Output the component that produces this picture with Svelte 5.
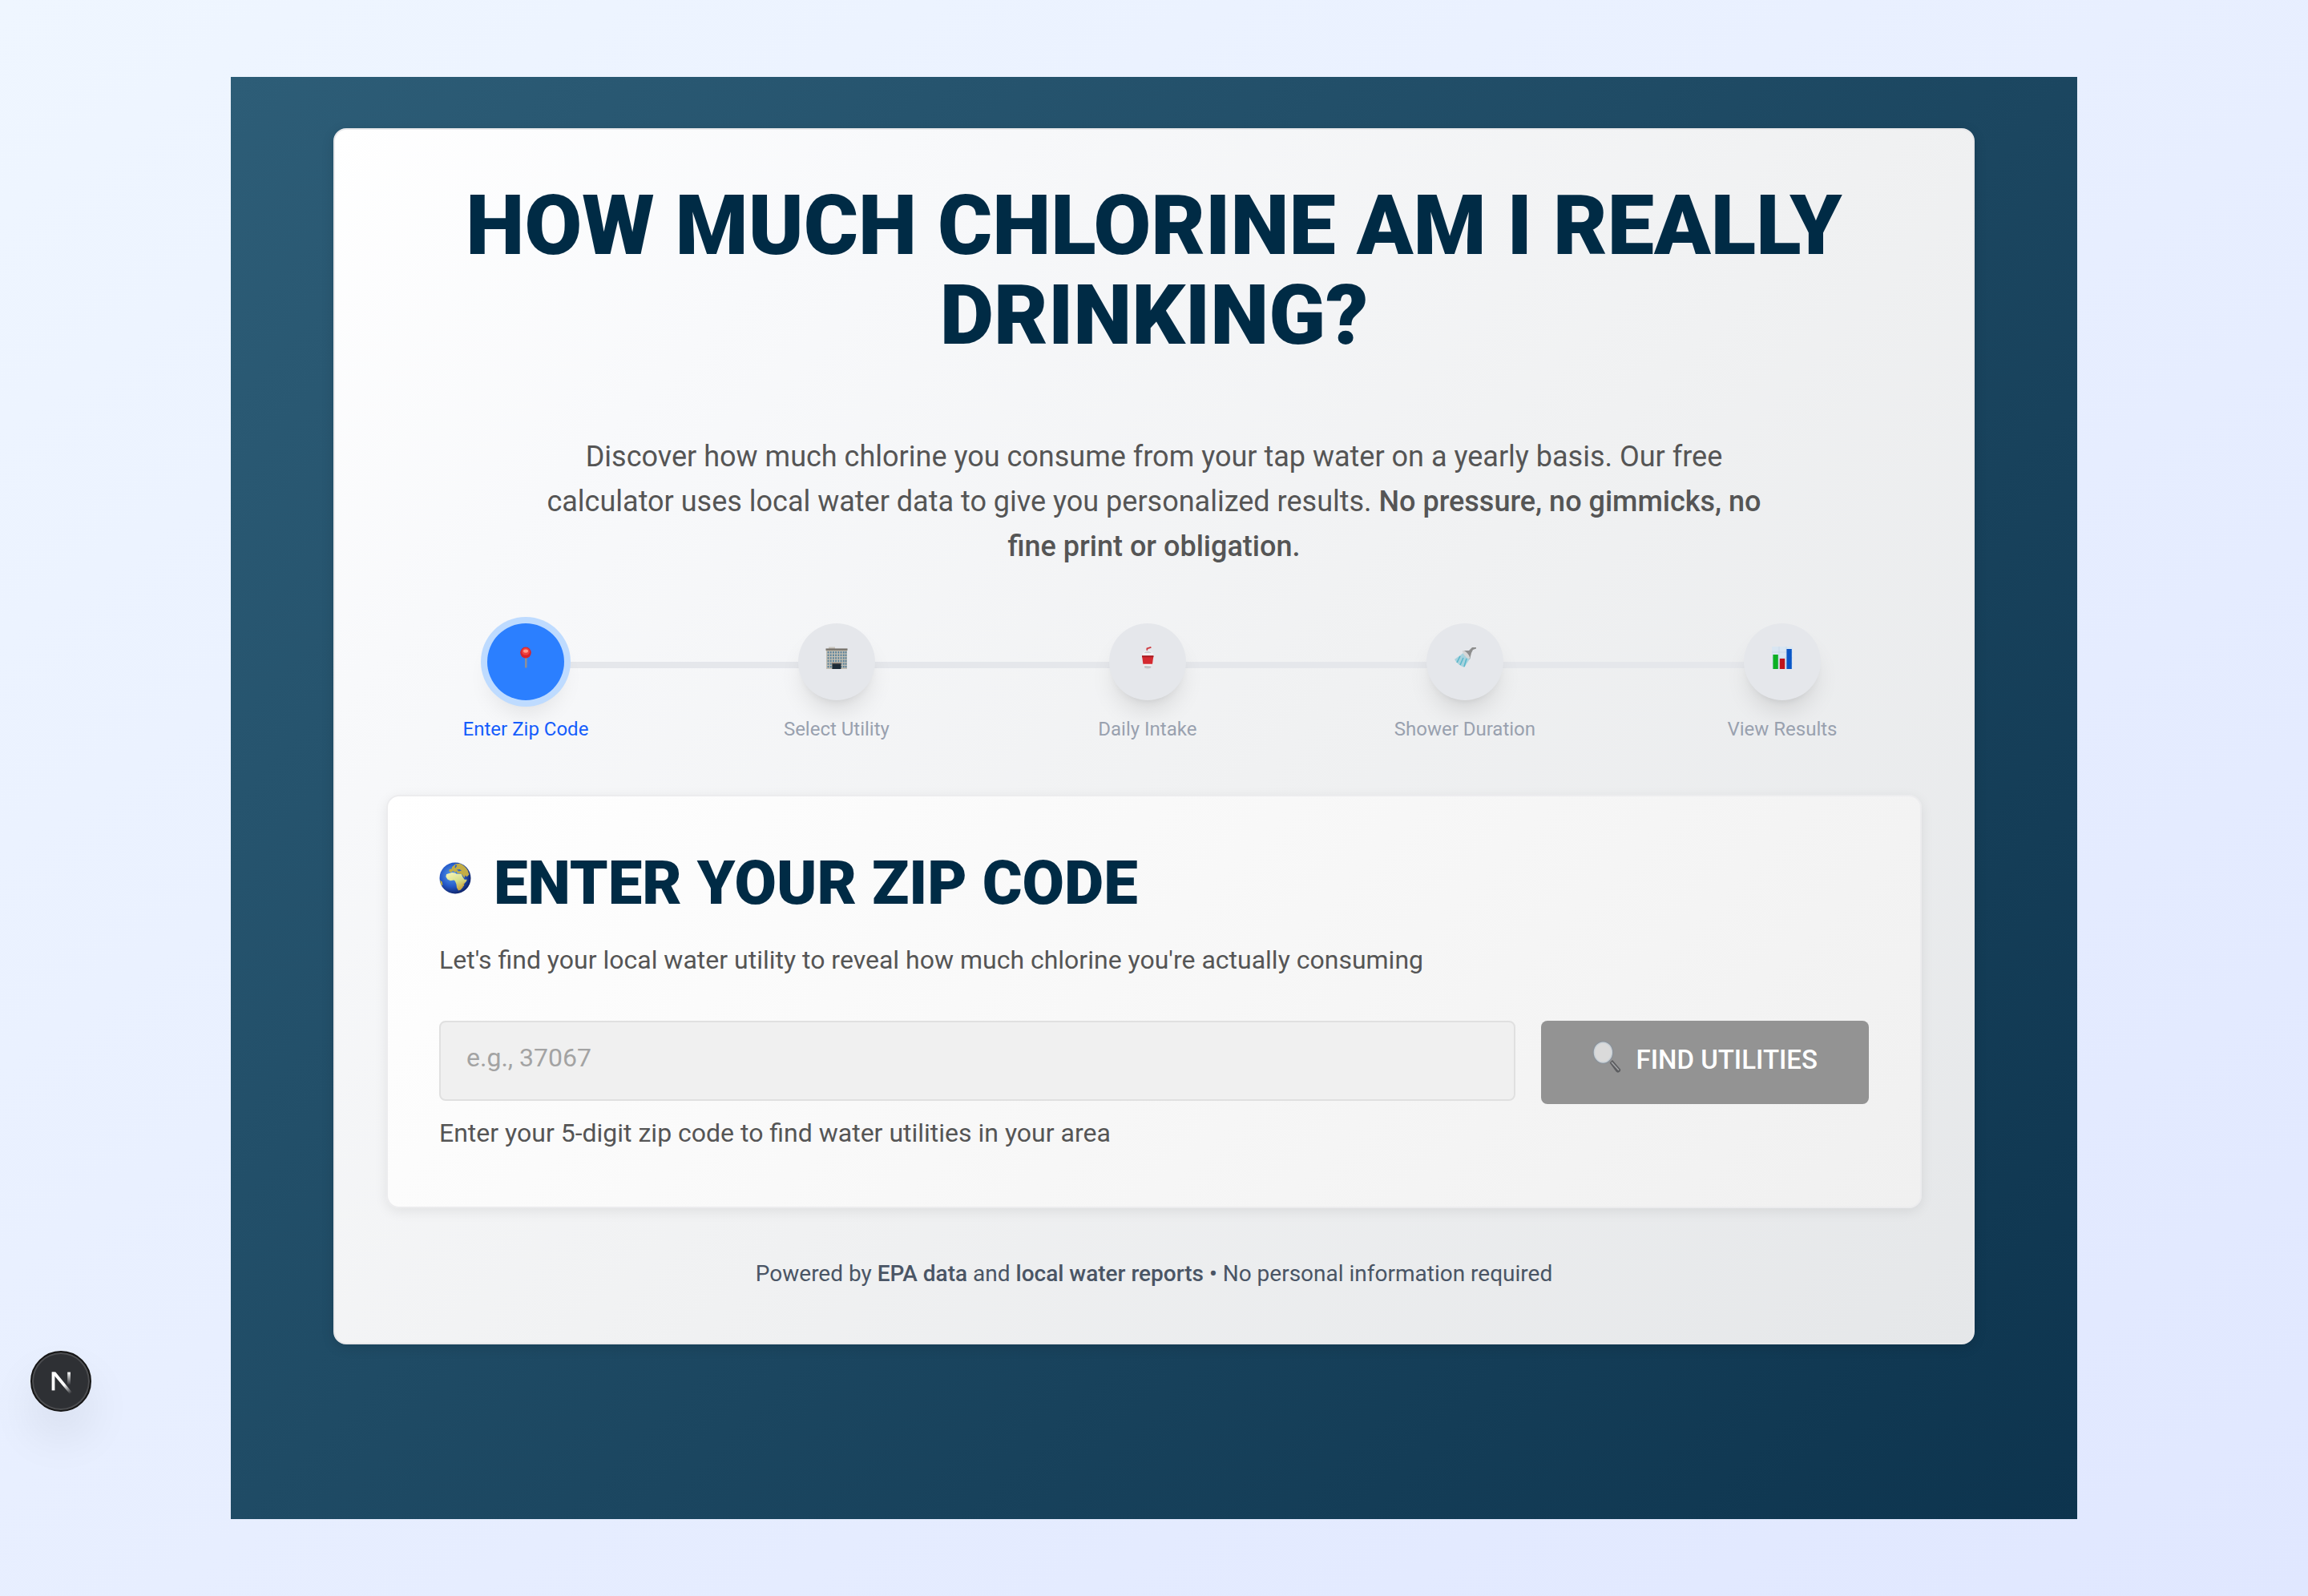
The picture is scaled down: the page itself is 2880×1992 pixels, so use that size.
<script>
  let zip = $state('');
  const steps = [
    { icon: 'pin', label: 'Enter Zip Code' },
    { icon: 'building', label: 'Select Utility' },
    { icon: 'cup', label: 'Daily Intake' },
    { icon: 'shower', label: 'Shower Duration' },
    { icon: 'chart', label: 'View Results' }
  ];
  let current = $state(0);
  let disabled = $derived(!/^\d{5}$/.test(zip));
</script>

{#snippet stepIcon(name)}
  <svg class="step-icon" viewBox="0 0 28 28" aria-hidden="true">
    {#if name === 'pin'}
      <rect x="13" y="13" width="2.6" height="13.6" rx="1.2" fill="#8d8f98" />
      <ellipse cx="14" cy="7.6" rx="6.8" ry="7" fill="#d9232b" />
      <ellipse cx="14" cy="6.2" rx="5" ry="4.6" fill="#f0413f" />
      <ellipse cx="14" cy="5.6" rx="3" ry="2.2" fill="#ff9d8f" />
    {:else if name === 'building'}
      <rect x="4" y="0.5" width="8" height="3" fill="#c9c5bd" />
      <rect x="1" y="4" width="26" height="24" fill="#c4bfb3" />
      <rect x="0.5" y="2.4" width="27" height="2.4" fill="#77736c" />
      {#each [6, 9.6, 13.2, 16.8, 20.4, 24] as y}
        {#each [2.6, 5.8, 9, 12.2, 15.4, 18.6, 21.8, 24.6] as x}
          <rect {x} {y} width="1.8" height="2.4" fill="#56809b" />
        {/each}
      {/each}
      <rect x="8.4" y="21" width="11" height="7" fill="#1d2c38" />
      <rect x="8" y="20" width="12" height="1.4" fill="#8a7f74" />
    {:else if name === 'cup'}
      <path d="M13.4 6V2.4L18.4 0.8" fill="none" stroke="#cf3a40" stroke-width="1.8" />
      <path d="M8 8.6Q14 1.6 20.4 8.6z" fill="#cfd1d4" />
      <path d="M8 8.6Q14 1.6 20.4 8.6" fill="none" stroke="#f7f7f8" stroke-width="1" />
      <path d="M7.6 8h13.2l-2.2 18.8q-4.4 2-8.8 0z" fill="#f1f1f2" />
      <path d="M10 24l8.6 0.6-0.4 2.2q-4 1.6-8 0z" fill="#c3c5c8" />
      <path d="M7 11.4h14.4l-1.4 10.4H8.4z" fill="#d42a30" />
      <path d="M7 11.4h14.4v1.8H7z" fill="#a5171d" />
    {:else if name === 'shower'}
      <path d="M12 8l9 6-8 12Q5 23 1 16z" fill="#8fcbd9" opacity="0.7" />
      <path d="M8 12L4 20M12 14L8 23M16 15L13 25" stroke="#5bb8cb" stroke-width="1.6" />
      <path d="M11 5l9 11 2-8 2-4 4-1.4V1h-5l-4 4z" fill="#8e8e8e" />
      <ellipse cx="15.5" cy="10" rx="2.2" ry="6.6" transform="rotate(-40 15.5 10)" fill="#d7d7d7" />
    {:else}
      <rect x="1" y="0" width="26" height="28" fill="#d9e6f2" />
      <path d="M1 7h26M1 14h26M1 21h26M10 0v28M19 0v28" stroke="#c5d5e4" stroke-width="0.6" />
      <rect x="2.4" y="10" width="6.4" height="18" fill="#0bb024" />
      <rect x="10.8" y="15" width="6.4" height="13" fill="#c0151b" />
      <rect x="19.4" y="3" width="6.4" height="25" fill="#0a57c7" />
    {/if}
  </svg>
{/snippet}

<div class="page">
  <div class="panel">
    <main class="card">
      <h1>How much chlorine am I really drinking?</h1>
      <p class="intro">
        Discover how much chlorine you consume from your tap water on a yearly basis. Our free calculator uses local
        water data to give you personalized results. <strong>No pressure, no gimmicks, no fine print or obligation.</strong>
      </p>

      <ol class="steps">
        {#each steps as step, i}
          <li class:active={i === current}>
            <span class="dot">{@render stepIcon(step.icon)}</span>
            <span class="label">{step.label}</span>
          </li>
        {/each}
      </ol>

      <section class="zip-card">
        <h2>
          <svg class="globe" viewBox="0 0 40 40" aria-hidden="true">
            <defs>
              <radialGradient id="sea" cx="0.4" cy="0.4" r="0.62">
                <stop offset="0" stop-color="#5aa0ee" />
                <stop offset="0.6" stop-color="#2358c8" />
                <stop offset="1" stop-color="#10256b" />
              </radialGradient>
              <linearGradient id="land" x1="0.2" y1="0" x2="0.7" y2="1">
                <stop offset="0" stop-color="#f6f3b4" />
                <stop offset="0.5" stop-color="#d6e08c" />
                <stop offset="1" stop-color="#c79a34" />
              </linearGradient>
            </defs>
            <circle cx="20" cy="20" r="19.5" fill="url(#sea)" />
            <path d="M11 14.5l5-1.5 4 0.4 1.6 1.4 6-0.4 1.8 4 2.2 3.4 3.2 0-1 2.4-3.6 3.8-0.6 3.4-3 3.4-2.6 0.6-2-3.4-0.6-4.4-1.4-3.6-1.4-1.6-4.6 0.8-3.6-1.6-2-3.4 0.6-3z" fill="url(#land)" />
            <path d="M12.4 11.6l0.4-2.6 2.8-0.6 0.6-2.4 4-3.4 5.6-0.8q6.4 2.6 9.8 8.4l1.8 5.4-3 3-1.6-2-1.4 3.2-2.8-4.4-2.6-1.2-3.6-0.4-0.6-2-2.4 1-2-2-1.4 1.4-1.6 0.6z" fill="#c3ad45" />
            <path d="M22 9.6l3.4-0.6 2.6 1.4-3.4 1zM20.6 3l1.6 1.6-1.8 3-1-1z" fill="#2a61c4" />
            <path d="M1 22.6l2.6 1.8 0.8 4.6-1.8-0.6z" fill="#c9b23c" />
            <path d="M29.6 27.6l1.8-1.8-0.4 3.6-1.2 1.4z" fill="#c9a23c" />
          </svg>
          <span>Enter your zip code</span>
        </h2>
        <p class="lead">Let's find your local water utility to reveal how much chlorine you're actually consuming</p>
        <form onsubmit={(e) => e.preventDefault()}>
          <input
            type="text"
            inputmode="numeric"
            maxlength="5"
            placeholder="e.g., 37067"
            aria-label="Zip code"
            aria-describedby="zip-help"
            bind:value={zip}
          />
          <button type="submit" class="find" {disabled}>
            <svg viewBox="0 0 36 40" aria-hidden="true">
              <path d="M21.6 27.4l3.4-3.4 10 11.4q1 2.6-2.4 4.2-1.8 0.4-3-1z" fill="#5c5d60" />
              <path d="M24 26.8l9 10" stroke="#a5a6a8" stroke-width="1.6" />
              <ellipse cx="13.4" cy="14.6" rx="12" ry="13.4" fill="#dadada" stroke="#8b929a" stroke-width="2" />
              <ellipse cx="13.4" cy="14.6" rx="11" ry="12.4" fill="none" stroke="#c8d0d6" stroke-width="1.4" />
            </svg>
            <span>Find utilities</span>
          </button>
        </form>
        <p class="help" id="zip-help">Enter your 5-digit zip code to find water utilities in your area</p>
      </section>

      <p class="foot">
        Powered by <strong>EPA data</strong> and <strong>local water reports •</strong> No personal information required
      </p>
    </main>
  </div>

  <button class="dev" aria-label="Open developer tools">
    <svg viewBox="0 0 40 40" aria-hidden="true">
      <defs>
        <linearGradient id="stem" x1="0" y1="0" x2="0" y2="1">
          <stop offset="0" stop-color="#fff" />
          <stop offset="1" stop-color="#fff" stop-opacity="0" />
        </linearGradient>
        <linearGradient id="slash" gradientUnits="userSpaceOnUse" x1="20" y1="20" x2="33" y2="36">
          <stop offset="0.3" stop-color="#fff" />
          <stop offset="1" stop-color="#fff" stop-opacity="0" />
        </linearGradient>
      </defs>
      <path d="M10 32V8" stroke="#fff" stroke-width="4" />
      <path d="M8 8h5l22 27-3 2L10 11z" fill="url(#slash)" />
      <rect x="28.6" y="8" width="4" height="17" fill="url(#stem)" />
    </svg>
  </button>
</div>

<style>
  :global(body) {
    margin: 0;
  }

  .page {
    box-sizing: border-box;
    min-height: 100vh;
    padding: 96px 10%;
    background: linear-gradient(to bottom right, #eff6ff, #e0e7ff);
    font-family: Roboto, 'Liberation Sans', sans-serif;
    color: #555;
  }

  .panel {
    box-sizing: border-box;
    min-height: calc(100vh - 192px);
    padding: 64px 128px;
    background: linear-gradient(135deg, #2d5d77, #0d344e);
  }

  .card {
    box-sizing: border-box;
    max-width: 2048px;
    margin: 0 auto;
    padding: 64px 64px 66px;
    border: 2px solid #e8e8ea;
    border-radius: 16px;
    background: linear-gradient(135deg, #fff, #f8f9fb 20%, #f0f1f2 55%, #e5e7e9);
    box-shadow: 0 4px 16px rgb(0 0 0 / 12%);
    text-align: center;
  }

  h1,
  h2,
  p,
  ol {
    margin: 0;
    padding: 0;
  }

  h1,
  h2 {
    color: #002b45;
    font-weight: 900;
    text-transform: uppercase;
  }

  h1 {
    font-size: 104px;
    line-height: 112px;
  }

  .intro {
    max-width: 1536px;
    margin: 92px auto 0;
    font-size: 36px;
    line-height: 56px;
  }

  strong {
    font-weight: 500;
  }

  .steps {
    position: relative;
    display: flex;
    justify-content: space-between;
    max-width: 1728px;
    margin: 68px auto 0;
    list-style: none;
  }

  .steps::before {
    content: '';
    position: absolute;
    top: 48px;
    left: 80px;
    right: 80px;
    height: 8px;
    background: #e5e7eb;
  }

  .steps li {
    position: relative;
    display: flex;
    flex-direction: column;
    align-items: center;
    gap: 20px;
    min-width: 160px;
    color: #99a1af;
    font-size: 24px;
    line-height: 32px;
  }

  .dot {
    display: flex;
    justify-content: center;
    align-items: center;
    box-sizing: border-box;
    width: 96px;
    height: 96px;
    padding-bottom: 10px;
    border-radius: 50%;
    background: #e5e7eb;
    box-shadow: 0 20px 30px -6px rgb(0 0 0 / 10%), 0 8px 12px -8px rgb(0 0 0 / 10%);
  }

  .active .dot {
    background: #2b7fff;
    box-shadow: 0 0 0 8px #bedbff, 0 20px 30px -6px rgb(0 0 0 / 10%), 0 8px 12px -8px rgb(0 0 0 / 10%);
  }

  .steps .active {
    color: #155dfc;
  }

  .step-icon {
    width: 28px;
    height: 28px;
  }

  .zip-card {
    margin-top: 66px;
    padding: 64px 64px 68px;
    border: 2px solid #ececee;
    border-radius: 16px;
    background: linear-gradient(135deg, #fff, #f0f0f0);
    box-shadow: 0 4px 16px rgb(0 0 0 / 8%);
    text-align: left;
  }

  h2 {
    display: flex;
    align-items: center;
    gap: 28px;
    font-size: 76px;
    line-height: 88px;
  }

  .globe {
    width: 40px;
    height: 40px;
    margin-bottom: 12px;
  }

  .lead,
  .help {
    font-size: 32px;
    line-height: 48px;
  }

  .lead {
    margin-top: 28px;
  }

  form {
    display: flex;
    align-items: flex-start;
    gap: 32px;
    margin-top: 52px;
  }

  input {
    flex: 1;
    box-sizing: border-box;
    min-width: 0;
    height: 100px;
    padding: 0 32px 8px;
    border: 2px solid #e0e0e0;
    border-radius: 8px;
    background: #f0f0f0;
    color: #555;
    font: inherit;
    font-size: 32px;
  }

  input::placeholder {
    color: #a3a3a3;
    opacity: 1;
  }

  .find {
    display: flex;
    justify-content: center;
    align-items: center;
    gap: 18px;
    box-sizing: border-box;
    height: 104px;
    padding: 0 64px 8px;
    border: 0;
    border-radius: 8px;
    background: #939393;
    color: #fff;
    font: inherit;
    font-size: 33px;
    font-weight: 500;
    text-transform: uppercase;
  }

  .find svg {
    width: 36px;
    height: 40px;
    margin-bottom: 6px;
  }

  .help {
    margin-top: 12px;
  }

  .foot {
    margin-top: 62px;
    color: #4a5565;
    font-size: 28px;
    line-height: 40px;
  }

  .dev {
    position: fixed;
    bottom: 230px;
    left: 38px;
    display: grid;
    place-items: center;
    width: 76px;
    height: 76px;
    padding: 0;
    border: 2px solid #161616;
    border-radius: 50%;
    background: #2e3034;
    box-shadow: inset 0 0 0 2px #4c4d50, 0 32px 64px -8px rgb(0 0 0 / 12%);
  }

  .dev svg {
    width: 38px;
    height: 38px;
  }
</style>
